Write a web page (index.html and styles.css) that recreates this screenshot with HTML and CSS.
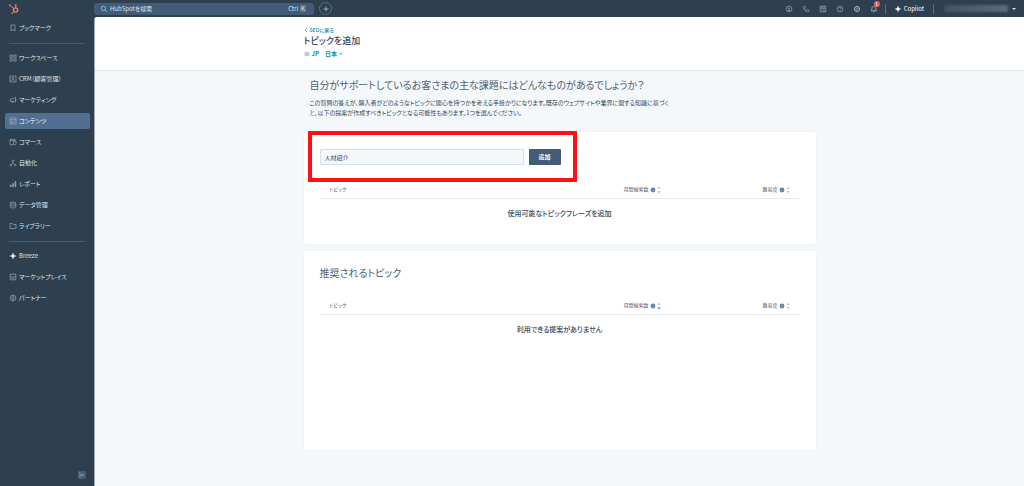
FILE: index.html
```html
<!DOCTYPE html>
<html lang="ja">
<head>
<meta charset="utf-8">
<title>トピックを追加</title>
<link rel="stylesheet" href="styles.css">
</head>
<body>
<svg class="defs" aria-hidden="true">
  <symbol id="help" viewBox="0 0 6 6"><circle cx="3" cy="3" r="2.4" fill="#5f83a8"/><path d="M3 2.6v1.6M3 1.6v.5" stroke="#c4d2e0" stroke-width=".5"/></symbol>
  <symbol id="sort" viewBox="0 0 4 8"><path d="M2 .8L3.6 2.8H.4z" fill="#a9bed2"/><path d="M2 7.2L.4 5.2h3.2z"/></symbol>
</svg>
<div class="app">
  <aside class="sidebar">
    <a class="logo" href="#" aria-label="HubSpot"><svg viewBox="0 0 12 12" fill="none" stroke="#ff7a59"><circle cx="7.6" cy="7" r="2.1" stroke-width="1.4"/><path d="M7.7 4.8V2.4M5.9 5.6L1.8 2.2M6 8.6L4.3 10.2" stroke-width="1"/><circle cx="7.7" cy="2" r=".6"/><circle cx="1.7" cy="2" r=".5"/><circle cx="4.2" cy="10.2" r=".4"/></svg></a>
    <nav class="nav">
      <a class="item" href="#"><svg class="icon" viewBox="0 0 8 8"><path d="M2 1h4v6L4 5.4 2 7z"/></svg>ブックマーク</a>
      <hr class="rule">
      <a class="item" href="#"><svg class="icon" viewBox="0 0 8 8"><path d="M1 1h2.3v2.3H1zM4.8 1h2.3v2.3H4.8zM1 4.8h2.3v2.3H1zM4.8 4.8h2.3v2.3H4.8z"/></svg>ワークスペース</a>
      <a class="item" href="#"><svg class="icon" viewBox="0 0 8 8"><path d="M1 1h6v6H1zM2.6 5.8c0-1.6 2.8-1.6 2.8 0M.4 2.7h1M.4 5.2h1"/><circle cx="4" cy="3.2" r=".8"/></svg>CRM（顧客管理）</a>
      <a class="item" href="#"><svg class="icon" viewBox="0 0 8 8"><path d="M1 3.5L6.5 1.5v4.5L1 5zM2.5 5.3c0 1.5 1.7 1.5 2 .4M6.5 3c1 0 1 1.5 0 1.5"/></svg>マーケティング</a>
      <a class="item active" href="#" aria-current="page"><svg class="icon" viewBox="0 0 8 8"><path d="M1 1h6v6H1zM1 2.7h6M2.4 4.2h1.4v1.5H2.4zM5 4.2h1M5 5.6h1"/></svg>コンテンツ</a>
      <a class="item" href="#"><svg class="icon" viewBox="0 0 8 8"><path d="M6 3V1.3H1v5.4h3.3M1 2.4h5M4.6 3.4h2.5v2.4L6 6.8H4.6z"/></svg>コマース</a>
      <a class="item" href="#"><svg class="icon" viewBox="0 0 8 8"><path d="M4 2.5v1.7L2.2 5.6M4 4.2l1.8 1.4"/><circle cx="4" cy="1.7" r=".8"/><circle cx="1.7" cy="6.2" r=".8"/><circle cx="6.3" cy="6.2" r=".8"/></svg>自動化</a>
      <a class="item" href="#"><svg class="icon" viewBox="0 0 8 8"><path class="solid" d="M.8 7V4.8h1.6V7zM3.200 7V3.200h1.600V7zM5.600 7V1.200h1.600V7z" opacity=".8"/></svg>レポート</a>
      <a class="item" href="#"><svg class="icon" viewBox="0 0 8 8"><ellipse cx="4" cy="2" rx="2.8" ry="1"/><path d="M1.2 2v4c0 1.3 5.6 1.3 5.6 0V2M1.2 4c0 1.3 5.6 1.3 5.6 0"/></svg>データ管理</a>
      <a class="item" href="#"><svg class="icon" viewBox="0 0 8 8"><path d="M1 1.5h2.3l.8 1H7v4H1z"/></svg>ライブラリー</a>
      <hr class="rule">
      <a class="item" href="#"><svg class="icon" viewBox="0 0 8 8"><path class="solid" d="M4 .6L4.9 3.1 7.4 4 4.9 4.9 4 7.4 3.1 4.9.6 4 3.1 3.1z"/></svg>Breeze</a>
      <a class="item" href="#"><svg class="icon" viewBox="0 0 8 8"><path d="M1.2 1.2h5.6v5.6H1.2zM1.2 3.4c.7 1 1.8 1 2.8 0 .7 1 1.8 1 2.8 0M2.6 5.2h2.8"/></svg>マーケットプレイス</a>
      <a class="item" href="#"><svg class="icon" viewBox="0 0 8 8"><circle cx="4" cy="4" r="2.9"/><circle cx="4" cy="4" r="1.2"/><path d="M4 1v1.7M4 5.3V7"/></svg>パートナー</a>
    </nav>
    <button class="collapse" type="button" aria-label="メニューを折りたたむ"><svg class="icon" viewBox="0 0 8 8"><path d="M2 1v6M3.2 4h3.5M4.7 2.5L3.2 4l1.5 1.5"/></svg></button>
  </aside>
  <div class="body">
    <header class="topbar">
      <label class="search"><svg class="icon" viewBox="0 0 8 8"><circle cx="3.4" cy="3.4" r="2.1"/><path d="M5 5l2 2"/></svg><input type="search" placeholder="HubSpotを検索" aria-label="HubSpotを検索"><span>Ctrl</span><kbd>K</kbd></label>
      <button class="plus" type="button" aria-label="作成"><svg class="icon" viewBox="0 0 8 8"><path d="M4 1.5v5M1.5 4h5"/></svg></button>
      <div class="tools">
        <button type="button" aria-label="アップグレード"><svg class="icon" viewBox="0 0 8 8"><circle cx="4" cy="4" r="2.9"/><path d="M2.5 3.2h3M4 3.2v2.5M2.7 5.5h2.6"/></svg></button>
        <button type="button" aria-label="電話"><svg class="icon" viewBox="0 0 8 8"><path d="M1.3 1.5l1.2-.6 1 1.7-.8.8c.4.9 1 1.5 1.9 1.9l.8-.8 1.7 1-.6 1.2C4 7.2.8 4 1.3 1.5z"/></svg></button>
        <button type="button" aria-label="マーケットプレイス"><svg class="icon" viewBox="0 0 8 8"><path d="M1.2 1.2h5.6v5.6H1.2zM1.2 3.3h5.6M3 1.2v2M5 1.2v2M2.8 5h2.4v1.8"/></svg></button>
        <button type="button" aria-label="ヘルプ"><svg class="icon" viewBox="0 0 8 8"><circle cx="4" cy="4" r="2.9"/><path d="M3.1 3.3c0-1.4 2-1.2 1.8 0C4.8 4 4 3.9 4 4.7M4 5.3v.6"/></svg></button>
        <button type="button" aria-label="設定"><svg class="icon" viewBox="0 0 8 8"><circle cx="4" cy="4" r="2.5" stroke-width="1"/><circle cx="4" cy="4" r="1"/><path d="M4 .8v.8M4 6.4v.8M.8 4h.8M6.4 4h.8"/></svg></button>
        <button class="bell" type="button" aria-label="通知 1件"><svg class="icon" viewBox="0 0 8 8"><path d="M1.2 5.8h5.2L5.8 5V3.3c0-2.5-3.9-2.5-3.9 0V5zM3.2 6.8h1.4"/></svg><span class="badge">1</span></button>
      </div>
      <button class="copilot" type="button"><svg class="icon" viewBox="0 0 8 8"><path class="solid" d="M4 .6L4.9 3.1 7.4 4 4.9 4.9 4 7.4 3.1 4.9.6 4 3.1 3.1z"/></svg>Copilot</button>
      <button class="account" type="button" aria-label="アカウント"><span class="veil"></span><span class="caret"></span></button>
    </header>
    <main class="page">
      <div class="heading">
        <div class="wrap">
          <a class="back" href="#"><svg class="chev" viewBox="0 0 4 6"><path d="M3 1L1 3l2 2"/></svg>SEOに戻る</a>
          <h1>トピックを追加</h1>
          <div class="locale"><svg class="icon" viewBox="0 0 8 8"><path d="M1.3 1.8h5.4v4.4H1.3zM3 1.8v4.4M5 1.8v4.4M1.3 4h5.4"/></svg><span>JP</span><button type="button">日本<i class="caret"></i></button></div>
        </div>
      </div>
      <div class="wrap">
        <div class="intro">
          <h2>自分がサポートしているお客さまの主な課題にはどんなものがあるでしょうか？</h2>
          <p>この質問の答えが、購入者がどのようなトピックに関心を持つかを考える手掛かりになります。既存のウェブサイトや業界に関する知識に基づくと、以下の提案が作成すべきトピックとなる可能性もあります。1つを選んでください。</p>
        </div>
        <section class="card first">
          <form class="add"><input type="text" value="人材紹介" aria-label="トピック"><button type="button">追加</button></form>
          <table>
            <thead><tr><th>トピック</th><th class="vol">月間検索数<svg class="help"><use href="#help"/></svg><svg class="sort"><use href="#sort"/></svg></th><th class="dif">難易度<svg class="help"><use href="#help"/></svg><svg class="sort"><use href="#sort"/></svg></th></tr></thead>
            <tbody><tr><td colspan="3">使用可能なトピックフレーズを追加</td></tr></tbody>
          </table>
        </section>
        <section class="card second">
          <h2>推奨されるトピック</h2>
          <table>
            <thead><tr><th>トピック</th><th class="vol">月間検索数<svg class="help"><use href="#help"/></svg><svg class="sort desc"><use href="#sort"/></svg></th><th class="dif">難易度<svg class="help"><use href="#help"/></svg><svg class="sort"><use href="#sort"/></svg></th></tr></thead>
            <tbody><tr><td colspan="3">利用できる提案がありません</td></tr></tbody>
          </table>
        </section>
      </div>
    </main>
  </div>
</div>
</body>
</html>
```
FILE: styles.css
```css
*, *::before { box-sizing: border-box; }
body { margin: 0; background: #2e3f50; color: #33475b; font: 6px/10px "Noto Sans CJK JP", sans-serif; font-feature-settings: "palt"; }
button, input { font: inherit; font-feature-settings: inherit; color: inherit; border: 0; padding: 0; margin: 0; background: none; }
a { text-decoration: none; color: inherit; }
h1, h2, p { margin: 0; }
.defs { position: absolute; width: 0; height: 0; }
.app { display: flex; min-height: 100vh; }
.icon { width: 8px; height: 8px; flex: none; display: block; fill: none; stroke: currentColor; stroke-width: .6; }
.solid { fill: currentColor; stroke: none; }

.sidebar { width: 94px; flex: none; display: flex; flex-direction: column; padding: 3px 4px 7px 5px; color: #dfe5eb; }
.logo { width: 12px; height: 12px; margin-left: 3px; }
.logo svg { display: block; }
.nav { display: flex; flex-direction: column; gap: 5px; padding-top: 5px; }
.item { display: flex; align-items: center; gap: 2px; height: 16px; padding-left: 4px; border-radius: 2px; white-space: nowrap; }
.item .icon { color: #a9b6c3; }
.item:nth-last-child(3) .icon { color: #fff; }
.active { background: #516f90; color: #fff; }
.rule { width: 76px; height: 1px; margin: 2px 4px 1px; border: 0; background: #425b76; }
.collapse { margin: auto 4px 0 auto; width: 8px; height: 8px; color: #a9b6c3; background: #425b76; border-radius: 1px; }

.body { flex: 1; min-width: 0; display: flex; flex-direction: column; }
.topbar { height: 17px; display: flex; align-items: center; color: #dfe5eb; padding-right: 8px; }
.search { width: 220px; height: 12px; display: flex; align-items: center; gap: 2px; padding: 0 8px 0 6px; background: #425b76; border-radius: 3px; }
.search input { flex: 1; min-width: 0; height: 10px; outline: 0; }
.search input::placeholder { color: #dfe5eb; opacity: 1; }
.search kbd { font: inherit; line-height: 7px; padding: 0 1px; background: #5b7288; border-radius: 1px; }
.plus { width: 13px; height: 13px; margin-left: 5px; border: 1px solid #516f90; border-radius: 50%; display: grid; place-items: center; }
.tools { display: flex; gap: 9px; margin-left: auto; padding-right: 7px; color: #a9b6c3; }
.bell { position: relative; color: #dfe5eb; }
.badge { position: absolute; left: 4px; top: -4px; width: 6px; height: 6px; border-radius: 50%; background: #f2545b; color: #fff; font-size: 5px; line-height: 6px; text-align: center; }
.copilot { display: flex; align-items: center; gap: 2px; height: 10px; padding: 0 9px 0 8px; border: solid #516f90; border-width: 0 1px; color: #fff; }
.account { display: flex; align-items: center; gap: 4px; margin-left: 10px; }
.veil { width: 64px; height: 7px; background: linear-gradient(90deg, #425264, #5d6b7a); filter: blur(1px); }
.caret { width: 0; height: 0; border: solid transparent; border-width: 2px 2px 0; border-top-color: currentColor; }

.page { flex: 1; background: #f5f8fa; border-left: 1px solid #a2abb5; border-top-left-radius: 3px; overflow: hidden; }
.wrap { max-width: 512px; margin: 0 auto; }
.heading { background: #fff; border-bottom: 1px solid #dfe3eb; padding: 9px 0 10px; }
.back { display: flex; align-items: center; gap: 2px; height: 8px; color: #0091ae; font-size: 5px; font-weight: 500; }
.chev { width: 4px; height: 6px; fill: none; stroke: currentColor; stroke-width: .6; }
h1 { font-size: 9px; line-height: 14px; font-weight: 500; }
.locale { display: flex; align-items: center; height: 12px; color: #0091ae; font-weight: 700; }
.locale .icon { color: #7c98b6; width: 6px; margin-right: 2px; }
.locale button { display: flex; align-items: center; gap: 3px; margin-left: 6px; }
.locale .caret { border-width: 2px 1px 0; }
.intro { padding: 6px 6px 14px; }
h2 { font-size: 10px; line-height: 16px; font-weight: 400; color: #516072; }
.intro p { max-width: 364px; margin-top: 5px; }
.card { background: #fff; border-radius: 2px; box-shadow: 0 0 2px #dfe6ee; padding: 0 16px; }
.first { position: relative; margin-bottom: 7px; padding-top: 17px; padding-bottom: 16px; }
.first::before { content: ""; position: absolute; left: 4px; top: -1px; width: 269px; height: 51px; border: 4px solid #f11; pointer-events: none; }
.second { min-height: 199px; padding-top: 14px; }
.add { display: flex; gap: 5px; }
.add input { width: 204px; height: 16px; padding: 0 4px; border: 1px solid #d5dfe9; border-radius: 1px; background: #f5f8fa; }
.add button { width: 32px; height: 16px; border-radius: 1px; background: #425b76; color: #fff; font-weight: 700; }
table { width: 100%; margin-top: 16px; border-collapse: collapse; }
th { height: 17px; padding: 0 10px; text-align: left; vertical-align: middle; font-size: 5px; font-weight: 400; color: #516072; border-bottom: 1px solid #e5eaf0; white-space: nowrap; }
.vol { width: 129px; padding-left: 0; }
.dif { width: 47px; }
td { height: 30px; padding: 0; text-align: center; font-size: 7px; font-weight: 500; }
.help { width: 6px; height: 6px; margin: 0 1px; vertical-align: middle; }
.sort { width: 4px; height: 8px; vertical-align: middle; fill: #a9bed2; }
.desc { fill: #00a4bd; }
```
